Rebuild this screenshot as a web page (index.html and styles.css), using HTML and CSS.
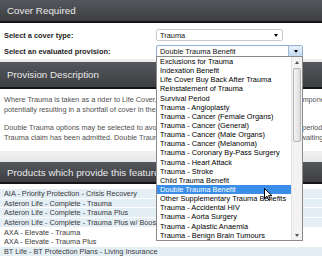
FILE: index.html
```html
<!DOCTYPE html>
<html lang="en">
<head>
    <meta charset="UTF-8">
    <meta name="viewport" content="width=device-width, initial-scale=1.0">
    <title>Cover Required</title>
    <link rel="stylesheet" href="styles.css">
</head>
<body>
    <div class="panel">
        <div class="panel-head head-cover">Cover Required</div>
        <div class="cover-form">
            <div class="form-row">
                <span class="form-label">Select a cover type:</span>
                <div class="select select-short">
                    <span class="select-value">Trauma</span>
                    <span class="caret"></span>
                </div>
            </div>
            <div class="form-row">
                <span class="form-label">Select an evaluated provision:</span>
                <div class="select select-open">
                    <span class="select-value">Double Trauma Benefit</span>
                    <span class="select-button"><span class="caret"></span></span>

                    <!-- open dropdown list -->
                    <div class="dropdown">
                        <ul class="dropdown-items">
                            <li>Exclusions for Trauma</li>
                            <li>Indexation Benefit</li>
                            <li>Life Cover Buy Back After Trauma</li>
                            <li>Reinstatement of Trauma</li>
                            <li>Survival Period</li>
                            <li>Trauma - Angioplasty</li>
                            <li>Trauma - Cancer (Female Organs)</li>
                            <li>Trauma - Cancer (General)</li>
                            <li>Trauma - Cancer (Male Organs)</li>
                            <li>Trauma - Cancer (Melanoma)</li>
                            <li>Trauma - Coronary By-Pass Surgery</li>
                            <li>Trauma - Heart Attack</li>
                            <li>Trauma - Stroke</li>
                            <li>Child Trauma Benefit</li>
                            <li class="selected">Double Trauma Benefit</li>
                            <li>Other Supplementary Trauma Benefits</li>
                            <li>Trauma - Accidental HIV</li>
                            <li>Trauma - Aorta Surgery</li>
                            <li>Trauma - Aplastic Anaemia</li>
                            <li>Trauma - Benign Brain Tumours</li>
                        </ul>
                        <div class="scrollbar">
                            <span class="scroll-btn"><span class="caret caret-up"></span></span>
                            <span class="scroll-track"><span class="scroll-thumb"></span></span>
                            <span class="scroll-btn"><span class="caret"></span></span>
                        </div>
                        <svg class="cursor" width="9" height="13" viewBox="0 0 9 13">
                            <path d="M0.5 0.5 L0.5 10.5 L3 8.2 L4.8 12.2 L6.3 11.5 L4.6 7.7 L8 7.7 Z" fill="#fff" stroke="#000" stroke-width="1"/>
                        </svg>
                    </div>
                </div>
            </div>
        </div>
    </div>

    <div class="panel-gap"></div>

    <div class="panel">
        <div class="panel-head head-provision">Provision Description</div>
        <div class="description">
            <p>Where Trauma is taken as a rider to Life Cover, a Trauma claim will reduce the Life Cover component<br>potentially resulting in a shortfall of cover in the event of a later claim.</p>
            <p>Double Trauma options may be selected to avoid this reduction, reinstating the cover after a period of benefit<br>Trauma claim has been admitted. Double Trauma benefits are usually subject to a period of waiting</p>
        </div>
    </div>

    <div class="panel-gap panel-gap-tall"></div>

    <div class="panel">
        <div class="panel-head head-products">Products which provide this feature</div>
        <ul class="products">
            <li>AIA - Priority Protection - Crisis Recovery</li>
            <li>Asteron Life - Complete - Trauma</li>
            <li>Asteron Life - Complete - Trauma Plus</li>
            <li>Asteron Life - Complete - Trauma Plus w/ Booster</li>
            <li class="plain">AXA - Elevate - Trauma</li>
            <li class="plain">AXA - Elevate - Trauma Plus</li>
            <li>BT Life - BT Protection Plans - Living Insurance</li>
        </ul>
    </div>
</body>
</html>
```

FILE: styles.css
```css
body {
    margin: 0;
    font-family: "Liberation Sans", Arial, sans-serif;
    background-color: #fff;
    overflow: hidden;
}
ul {
    list-style: none;
    margin: 0;
    padding: 0;
}
.panel-head {
    padding-left: 7px;
    font-size: 9.8px;
    color: #e8e8e8;
    background: linear-gradient(#54575b, #3c3e42);
    border-bottom: 2px solid #151515;
}
.head-cover {
    height: 21px;
    line-height: 21px;
}
.head-provision {
    height: 25px;
    line-height: 26px;
}
.head-products {
    height: 20px;
    line-height: 21px;
}
.panel-gap {
    height: 3px;
    background-color: #ececec;
}
.panel-gap-tall {
    height: 11px;
    background: linear-gradient(#f1f1f1, #e8e8e8);
}

/* cover form */
.cover-form {
    padding: 6px 0 2px 4px;
    display: flex;
    flex-direction: column;
    gap: 4px;
}
.form-row {
    display: grid;
    grid-template-columns: 152px auto;
    align-items: center;
    height: 12px;
}
.form-label {
    font-size: 7.4px;
    font-weight: bold;
    color: #1e1e1e;
}
.select {
    position: relative;
    box-sizing: border-box;
    height: 12px;
    display: flex;
    align-items: center;
    border: 1px solid #c9c9c9;
    border-radius: 2px;
    background-color: #fff;
    font-size: 7.4px;
    color: #111;
}
.select-short {
    width: 127px;
}
.select-open {
    width: 147px;
    border-color: #8fb0d4;
}
.select-value {
    flex: 1;
    padding-left: 3px;
}
.caret {
    width: 0;
    height: 0;
    border-left: 2.5px solid transparent;
    border-right: 2.5px solid transparent;
    border-top: 3px solid #000;
}
.caret-up {
    border-top: none;
    border-bottom: 3px solid #000;
}
.select-short .caret {
    margin-right: 4px;
}
.select-button {
    width: 13px;
    height: 10px;
    display: flex;
    align-items: center;
    justify-content: center;
    background: linear-gradient(#e6f0fa, #c4daf0);
    border-left: 1px solid #9ab8d8;
}

/* open dropdown */
.dropdown {
    position: absolute;
    left: -1px;
    top: 10px;
    width: 147px;
    height: 185px;
    box-sizing: border-box;
    display: flex;
    border: 1px solid #8a8a8a;
    background-color: #fff;
    z-index: 2;
}
.dropdown-items {
    flex: 1;
}
.dropdown-items li {
    height: 9.15px;
    line-height: 9.15px;
    padding-left: 3px;
    font-size: 7.4px;
    color: #000;
    white-space: nowrap;
}
.dropdown-items li.selected {
    background-color: #3a8ee8;
    color: #fff;
}
.scrollbar {
    width: 10px;
    display: flex;
    flex-direction: column;
    background-color: #f2f2f2;
    border-left: 1px solid #e2e2e2;
}
.scroll-btn {
    height: 10px;
    display: flex;
    align-items: center;
    justify-content: center;
}
.scroll-btn .caret {
    border-left-width: 2px;
    border-right-width: 2px;
    border-top-color: #555;
    border-bottom-color: #555;
}
.scroll-track {
    flex: 1;
}
.scroll-thumb {
    display: block;
    height: 72px;
    margin: 1px 1px 0;
    border: 1px solid #b4b4b4;
    border-radius: 2px;
    background: linear-gradient(90deg, #f4f4f4, #dcdcdc);
}
.cursor {
    position: absolute;
    left: 107px;
    top: 131px;
}

/* provision description */
.description {
    padding: 6px 0 9px 4px;
    font-size: 7.3px;
    line-height: 9.5px;
    color: #505050;
}
.description p {
    margin: 0 0 9px;
    white-space: nowrap;
}
.description p:last-child {
    margin-bottom: 0;
}

/* products */
.products {
    padding-top: 5px;
}
.products li {
    height: 9.7px;
    line-height: 9.7px;
    padding-left: 4px;
    font-size: 7.3px;
    color: #3a3a3a;
    white-space: nowrap;
    border-bottom: 1px solid #fff;
    box-sizing: border-box;
    background-color: #e4eef5;
}
.products li.plain {
    background-color: #fff;
}
```
